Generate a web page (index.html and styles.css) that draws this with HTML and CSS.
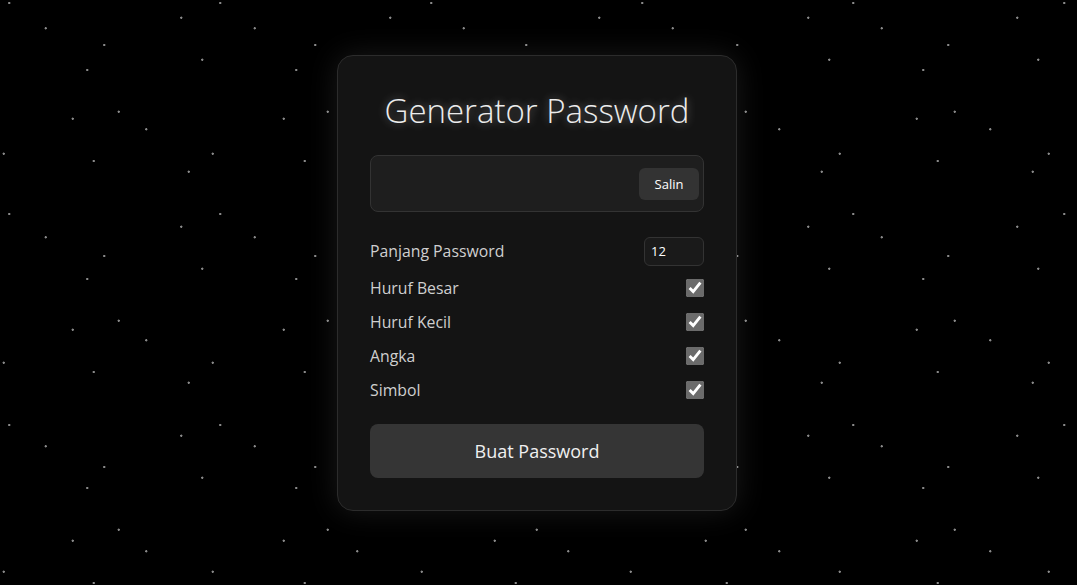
FILE: index.html
```html
<!DOCTYPE html>
<html lang="id">
<head>
<meta charset="utf-8">
<title>Generator Password</title>
<link rel="stylesheet" href="styles.css">
</head>
<body>
<main class="card">
  <h1 class="title">Generator Password</h1>
  <div class="output">
    <input class="output-field" type="text" readonly aria-label="Password">
    <button class="copy-btn" type="button">Salin</button>
  </div>
  <div class="option option-length">
    <label class="option-label" for="length">Panjang Password</label>
    <input id="length" class="length-input" type="number" value="12" min="4" max="64">
  </div>
  <div class="option">
    <label class="option-label" for="upper">Huruf Besar</label>
    <input id="upper" class="check" type="checkbox" checked>
  </div>
  <div class="option">
    <label class="option-label" for="lower">Huruf Kecil</label>
    <input id="lower" class="check" type="checkbox" checked>
  </div>
  <div class="option">
    <label class="option-label" for="number">Angka</label>
    <input id="number" class="check" type="checkbox" checked>
  </div>
  <div class="option">
    <label class="option-label" for="symbol">Simbol</label>
    <input id="symbol" class="check" type="checkbox" checked>
  </div>
  <button class="generate-btn" type="button">Buat Password</button>
</main>
</body>
</html>
```

FILE: styles.css
```css
html, body {
  margin: 0;
  height: 100%;
}

body {
  box-sizing: border-box;
  display: flex;
  justify-content: center;
  align-items: flex-start;
  padding-top: 55px;
  padding-right: 3px;
  font-family: "Open Sans", "Noto Sans", sans-serif;
  background-color: #000;
  background-image:
    radial-gradient(circle at 9.3px 3px, #8a8a8a 0.8px, transparent 1.5px),
    radial-gradient(circle at 104.3px 45px, #8a8a8a 0.8px, transparent 1.5px),
    radial-gradient(circle at 72.7px 118.7px, #8a8a8a 0.8px, transparent 1.5px),
    radial-gradient(circle at 146.3px 129.3px, #8a8a8a 0.8px, transparent 1.5px),
    radial-gradient(circle at 93.7px 161px, #8a8a8a 0.8px, transparent 1.5px),
    radial-gradient(circle at 188.7px 171.7px, #8a8a8a 0.8px, transparent 1.5px),
    radial-gradient(circle at 181.3px 17.7px, #8a8a8a 0.8px, transparent 1.5px),
    radial-gradient(circle at 45.7px 28.3px, #8a8a8a 0.8px, transparent 1.5px),
    radial-gradient(circle at 202.3px 59.7px, #8a8a8a 0.8px, transparent 1.5px),
    radial-gradient(circle at 87.3px 70px, #8a8a8a 0.8px, transparent 1.5px),
    radial-gradient(circle at 118.7px 111.7px, #8a8a8a 0.8px, transparent 1.5px),
    radial-gradient(circle at 3.7px 153.7px, #8a8a8a 0.8px, transparent 1.5px);
  background-size:
    211px 211px, 211px 211px, 211px 211px, 211px 211px, 211px 211px, 211px 211px,
    209px 209px, 209px 209px, 209px 209px, 209px 209px, 209px 209px, 209px 209px;
}

.card {
  box-sizing: border-box;
  width: 400px;
  padding: 32px;
  background: #141414;
  border: 1px solid #2c2c2c;
  border-radius: 16px;
  box-shadow: 0 0 30px rgba(255, 255, 255, 0.1);
}

.title {
  margin: 2px 0 23px;
  font-size: 33px;
  line-height: 42px;
  font-weight: 300;
  text-align: center;
  color: #ececec;
  text-shadow: 0 0 10px rgba(255, 255, 255, 0.4);
}

.output {
  display: flex;
  align-items: center;
  height: 57px;
  box-sizing: border-box;
  padding: 0 4px 0 12px;
  background: #1e1e1e;
  border: 1px solid #333;
  border-radius: 8px;
}

.output-field {
  flex: 1;
  min-width: 0;
  background: transparent;
  border: none;
  outline: none;
  color: #fff;
  font: inherit;
  font-size: 16px;
}

.copy-btn {
  width: 60px;
  height: 32px;
  border: none;
  border-radius: 6px;
  background: #333;
  color: #fff;
  font-family: inherit;
  font-size: 13px;
  cursor: pointer;
}

.option {
  display: flex;
  justify-content: space-between;
  align-items: center;
  height: 24px;
  margin-bottom: 10px;
}

.option-length {
  height: 30px;
  margin-top: 24px;
}

.option-label {
  font-size: 15.8px;
  color: #cfcfcf;
}

.length-input {
  box-sizing: border-box;
  width: 60px;
  height: 29px;
  padding: 0 6px;
  background: #1a1a1a;
  border: 1px solid #333;
  border-radius: 6px;
  color: #fff;
  font-family: inherit;
  font-size: 13px;
  outline: none;
}

.check {
  width: 18px;
  height: 18px;
  margin: 0;
  accent-color: #6b6b6b;
}

.generate-btn {
  display: block;
  width: 100%;
  height: 54px;
  margin-top: 22px;
  border: none;
  border-radius: 8px;
  background: #353535;
  color: #f0f0f0;
  font-family: inherit;
  font-size: 18px;
  cursor: pointer;
}
```
